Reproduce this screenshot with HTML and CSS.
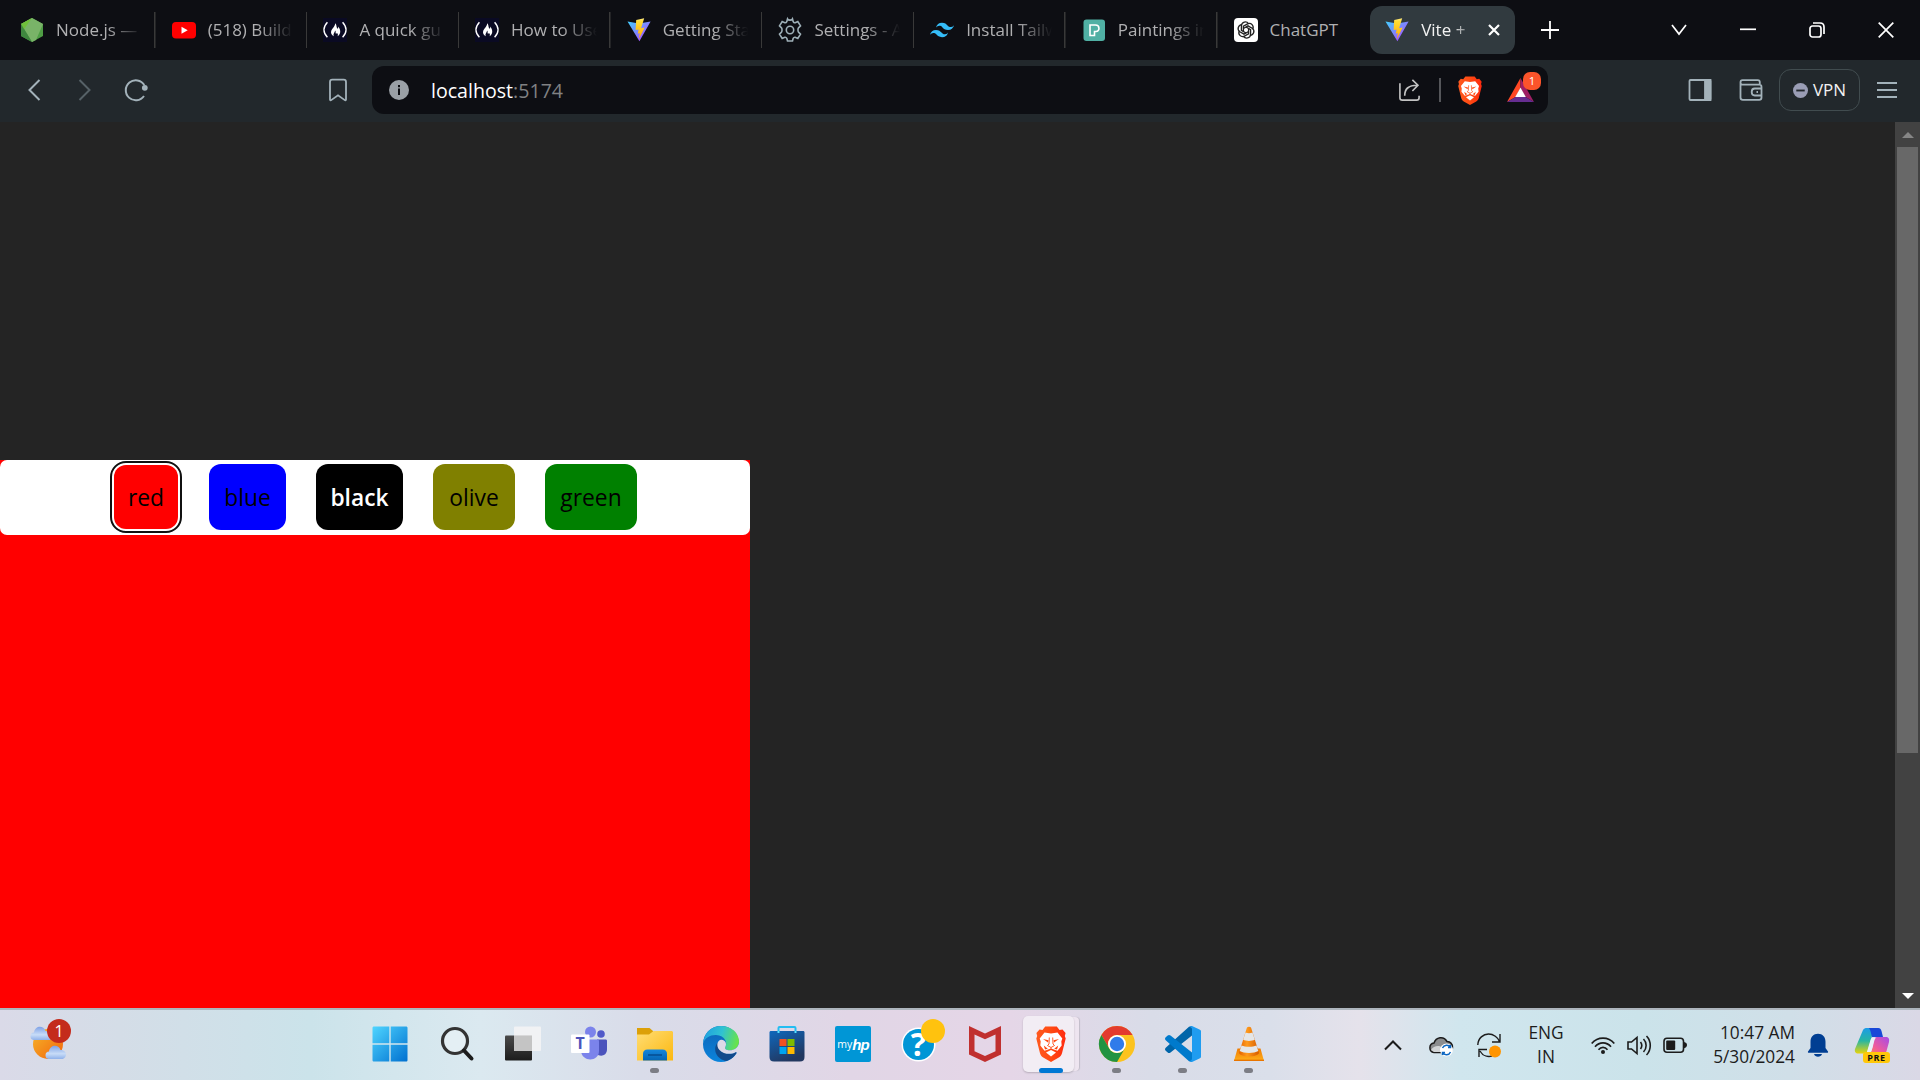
FILE: index.html
```html
<!DOCTYPE html>
<html lang="en">
<head>
<meta charset="utf-8">
<title>Vite + React</title>
<link rel="stylesheet" href="styles.css">
</head>
<body>
<svg class="defs" aria-hidden="true">
  <defs>
    <linearGradient id="viteBlue" x1="0" y1="0" x2="1" y2="1"><stop offset="0" stop-color="#41d1ff"/><stop offset="1" stop-color="#bd34fe"/></linearGradient>
    <linearGradient id="viteBolt" x1="0" y1="0" x2="0" y2="1"><stop offset="0" stop-color="#ffea83"/><stop offset=".15" stop-color="#ffdd35"/><stop offset="1" stop-color="#ffa800"/></linearGradient>
    <linearGradient id="braveFill" x1="0" x2="1"><stop offset="0" stop-color="#ff5a1f"/><stop offset=".5" stop-color="#ff4a12"/><stop offset="1" stop-color="#ff2a10"/></linearGradient>
    <linearGradient id="winFill" x1="0" y1="0" x2="1" y2="1"><stop offset="0" stop-color="#4fd5ff"/><stop offset="1" stop-color="#0070d0"/></linearGradient>
    <linearGradient id="sunFill" x1="0" y1="0" x2="1" y2="1"><stop offset="0" stop-color="#f5b62a"/><stop offset="1" stop-color="#f3640b"/></linearGradient>
    <linearGradient id="cloudFill" x1="0" y1="0" x2="0" y2="1"><stop offset="0" stop-color="#7fa2e6"/><stop offset=".6" stop-color="#c8dcf7"/><stop offset="1" stop-color="#8fb1ea"/></linearGradient>
    <linearGradient id="taskDark" x1="0" y1="0" x2="0" y2="1"><stop offset="0" stop-color="#4a4a4a"/><stop offset="1" stop-color="#1c1c1c"/></linearGradient>
    <linearGradient id="folderFill" x1="0" y1="0" x2="1" y2="1"><stop offset="0" stop-color="#ffdd75"/><stop offset="1" stop-color="#fcb80f"/></linearGradient>
    <linearGradient id="folderDock" x1="0" y1="0" x2="0" y2="1"><stop offset="0" stop-color="#1587dd"/><stop offset="1" stop-color="#0665b4"/></linearGradient>
    <linearGradient id="edgeTop" x1="0" y1=".3" x2="1" y2=".5"><stop offset="0" stop-color="#1e9fe0"/><stop offset=".5" stop-color="#30c2d2"/><stop offset="1" stop-color="#69e447"/></linearGradient>
    <linearGradient id="edgeMid" x1="0" y1="0" x2="0" y2="1"><stop offset="0" stop-color="#0f62b5"/><stop offset="1" stop-color="#0a84dc"/></linearGradient>
    <linearGradient id="storeFill" x1="0" y1="0" x2=".5" y2="1"><stop offset="0" stop-color="#0f68bd"/><stop offset="1" stop-color="#22375f"/></linearGradient>
    <linearGradient id="coneFill" x1="0" x2="1"><stop offset="0" stop-color="#e36100"/><stop offset=".4" stop-color="#ff9a1c"/><stop offset="1" stop-color="#d65c00"/></linearGradient>
    <linearGradient id="coneBase" x1="0" y1="0" x2="0" y2="1"><stop offset="0" stop-color="#ef7a00"/><stop offset="1" stop-color="#ffb01c"/></linearGradient>
    <linearGradient id="copLeft" x1="0" y1="0" x2="0" y2="1"><stop offset="0" stop-color="#1c9be8"/><stop offset=".5" stop-color="#28b6a2"/><stop offset="1" stop-color="#e8d40a"/></linearGradient>
    <linearGradient id="copRight" x1="1" y1="0" x2="0" y2="1"><stop offset="0" stop-color="#a54be8"/><stop offset=".6" stop-color="#ee5a9c"/><stop offset="1" stop-color="#ff8a4c"/></linearGradient>
    <symbol id="vite" viewBox="0 0 24 24">
      <path d="M.5 3.4 12 5.4l11.6-2L12.4 23.3z" fill="url(#viteBlue)"/>
      <path d="M17.2.3 9.2 1.9l-.6 10.2 3-.7-.8 4.3 2-.6-.9 5.8 5.8-11.4-3.6.7z" fill="url(#viteBolt)"/>
    </symbol>
    <symbol id="camp" viewBox="0 0 24 24">
      <path d="M0 0h24v24H0z" fill="#0a0a23"/>
      <path d="M4.4 4.2C-.1 9-.1 14.600 4.400 19.200M19.600 4.200c4.500 4.800 4.500 10.400 0 15" fill="none" stroke="#fff" stroke-width="1.500"/>
      <path d="M12.200 5.200c2 2.200.6 4 2.600 5.500.5-.8.5-1.300.3-2.200 2.400 2.600 3.500 7.100-.5 9.800.7-1.600.2-2.600-.7-3.200-.4.8-1 .9-1.200.1-.3-.9.300-2-.5-2.800-.5 2.400-2.600 3.600-1.200 5.900-4.100-2.100-3.300-5.600-1.400-7.800 1.500-1.800 2.400-3 2.600-5.300z" fill="#fff"/>
    </symbol>
    <symbol id="lion" viewBox="0 0 30 36">
      <path d="M9.200.5h11.600L23.500 4l3-.6L29.600 7l-.8 3 .9 2.500-3.700 14.800c-.5 1.800-1.600 3.200-3.200 4.300L15 36l-7.800-4.400C5.600 30.500 4.500 29.100 4 27.300L.3 12.500l.9-2.500-.8-3 3.100-3.600 3 .6z" fill="url(#braveFill)"/>
      <path d="m8.500 6.500 6.500 1 6.500-1 4.800 6-1 3 .4 4-4.200 5.200-2.200-.8L15 22.500l-4.300 1.400-2.200.8-4.200-5.200.4-4-1-3z" fill="#fff"/>
      <path d="m15 24 5 2.500-5 4-5-4z" fill="#fff"/>
      <path d="m7 13 5.500 1.300-.5 2.200zM23 13l-5.500 1.300.5 2.200zM7.800 19.500l4 3.200-2.800.800zM22.200 19.500l-4 3.200 2.800.800z" fill="#ff4a12"/>
      <path d="m13.300 11.500-.3 6.500-1.500 1.500 3.500 2 3.500-2L17 18l-.3-6.500M15 21.500v2.300" fill="none" stroke="#ff4a12" stroke-width=".9"/>
    </symbol>
  </defs>
</svg>

<div class="screen">
  <header class="tabstrip">
    <nav class="tabs">
      <div class="tab"><svg class="fav" viewBox="0 0 24 24"><path d="m12 0 11 6v12l-11 6-11-6V6z" fill="#4f9e45"/><path d="m12 0 11 6-7 16-4 2L1 6z" fill="#79b368"/><path d="m1 6 11-6-8.500 12z" fill="#6fbf3a"/><path d="m1 6 11 18L1 18z" fill="#3f873f"/></svg><span class="label">Node.js —</span></div>
      <div class="tab"><svg class="fav" viewBox="0 0 24 24"><rect y="4" width="24" height="16.500" rx="4" fill="red"/><path d="m9.500 8.700 6.200 3.500-6.200 3.600z" fill="#fff"/></svg><span class="label">(518) Build</span></div>
      <div class="tab"><svg class="fav"><use href="#camp"/></svg><span class="label">A quick gu</span></div>
      <div class="tab"><svg class="fav"><use href="#camp"/></svg><span class="label">How to Use</span></div>
      <div class="tab"><svg class="fav"><use href="#vite"/></svg><span class="label">Getting Sta</span></div>
      <div class="tab"><svg class="fav line-ico" viewBox="0 0 24 24"><circle cx="12" cy="12" r="3.700"/><path d="m9.500 1 -.7 2.700c-.4.800-1.200 1.200-2 1L4.200 3.600 1.500 7.900l2 2c.7.700.7 3.500 0 4.200l-2 2 2.700 4.300 2.600-1.100c.8-.2 1.600.2 2 1l.7 2.700h5l.7-2.700c.4-.8 1.200-1.200 2-1l2.600 1.100 2.700-4.300-2-2c-.7-.7-.7-3.500 0-4.200l2-2-2.700-4.300-2.600 1.100c-.8.200-1.600-.2-2-1L14.500 1c-.8 1.500-4.200 1.500-5 0z"/></svg><span class="label">Settings - A</span></div>
      <div class="tab"><svg class="fav" viewBox="0 0 24 24"><path d="M12 4.800q-4.800 0-6 4.800 1.800-2.400 4.200-1.800c.9.200 1.600.9 2.300 1.600C13.700 10.600 15.100 12 18 12q4.800 0 6-4.800-1.800 2.400-4.200 1.800c-.9-.2-1.600-.9-2.300-1.600C16.300 6.200 15 4.800 12 4.800zM6 12q-4.800 0-6 4.800 1.800-2.400 4.200-1.800c.9.200 1.600.9 2.300 1.600 1.200 1.200 2.600 2.600 5.500 2.600q4.800 0 6-4.800-1.800 2.400-4.200 1.800c-.9-.2-1.600-.9-2.300-1.600C10.300 13.400 9 12 6 12z" fill="#35bdf8"/></svg><span class="label">Install Tailw</span></div>
      <div class="tab"><svg class="fav" viewBox="0 0 24 24"><rect x="1.500" y="1.500" width="21.500" height="21.500" rx="3" fill="#50b0a4"/><path d="M8 7h5.500c4.500 0 4.500 6.500.5 6.500h-1.500v4H8z" fill="none" stroke="#fff" stroke-width="1.600"/></svg><span class="label">Paintings in</span></div>
      <div class="tab"><svg class="fav" viewBox="0 0 24 24"><rect width="24" height="24" rx="4" fill="#fff"/><g fill="none" stroke="#222" stroke-width="1.350"><path id="pt" d="M9.400 13.500V8.200l4.200-2.400c3.500-1.600 6.700 2 5.100 5.200"/><use href="#pt" transform="rotate(60 12 12)"/><use href="#pt" transform="rotate(120 12 12)"/><use href="#pt" transform="rotate(180 12 12)"/><use href="#pt" transform="rotate(240 12 12)"/><use href="#pt" transform="rotate(300 12 12)"/></g></svg><span class="label">ChatGPT</span></div>
      <div class="tab active"><svg class="fav"><use href="#vite"/></svg><span class="label">Vite +</span><svg class="tab-close" viewBox="0 0 12 12"><path d="m1 1 10 10M11 1 1 11"/></svg></div>
    </nav>
    <svg class="new-tab" viewBox="0 0 18 18"><path d="M9 0v18M0 9h18"/></svg>
    <div class="window-controls">
      <svg viewBox="0 0 16 16"><path d="m1 3 7 9 7-9"/></svg>
      <svg viewBox="0 0 16 16"><path d="M0 7.300h16"/></svg>
      <svg viewBox="0 0 16 16"><rect x="1" y="4" width="11" height="11" rx="2.500"/><path d="M4 1h7c2.500 0 4 1.500 4 4v7"/></svg>
      <svg viewBox="0 0 16 16"><path d="m.7.700 14.600 14.600M15.300.7.700 15.300"/></svg>
    </div>
  </header>

  <div class="toolbar">
    <svg class="tool back" viewBox="0 0 24 24"><path d="M17.500 2 7.500 12l10 10"/></svg>
    <svg class="tool forward" viewBox="0 0 24 24"><path d="m6.500 2 10 10-10 10"/></svg>
    <svg class="tool reload" viewBox="0 0 24 24"><path d="M20 18A10 10 0 1 1 20.300 7"/><circle cx="20.800" cy="9.800" r="2.900"/></svg>
    <svg class="tool bookmark" viewBox="0 0 24 24"><path d="M4 21.500V4c0-1.400 1-2.300 2.300-2.300h11.400C19 1.700 20 2.600 20 4v17.500c0 .7-.7 1-1.200.6L12 17.300l-6.800 4.800c-.5.400-1.200.1-1.200-.6z"/></svg>
    <div class="address">
      <svg class="info" viewBox="0 0 20 20"><circle cx="10" cy="10" r="10" fill="#9aa0a6"/><path d="M9 8.500h2V15H9zM9 5h2v2.200H9z" fill="#0d0e13"/></svg>
      <span class="url">localhost<span class="port">:5174</span></span>
      <svg class="share" viewBox="0 0 24 24"><path d="M2 5v15c0 1.800.7 2.500 2.500 2.500h15c1.800 0 2.500-.7 2.500-2.500v-2M7 18C7 11 10.500 7 20 7M15 1.500 20.800 7 15 13"/></svg>
      <span class="rule"></span>
      <svg class="brave-shield"><use href="#lion"/></svg>
      <div class="rewards">
        <svg viewBox="0 0 27 24"><path d="M13.500 0v10L8.500 19 0 24z" fill="#ff4724"/><path d="M13.500 0 27 24l-8.500-5-5-9z" fill="#9e1f63"/><path d="M0 24h27l-8.500-5h-10z" fill="#662d91"/><path d="m13.500 9.500 5.300 9.500H8.200z" fill="#fff"/></svg>
        <span class="count">1</span>
      </div>
    </div>
    <div class="actions">
      <svg class="tool" viewBox="0 0 24 24"><rect x="1.500" y="2" width="21" height="20" rx="1"/><path d="M17 2h5.500v20H17z" fill="#a3b2ba"/></svg>
      <svg class="tool" viewBox="0 0 24 24"><path d="M1.500 4v15.500c0 1.500.8 2.300 2.300 2.300h16.400c1.500 0 2.300-.8 2.300-2.300V9c0-1.500-.8-2.300-2.300-2.300H3.500C2.300 6.700 1.500 5.700 1.500 4.400S2.300 2.200 3.500 2.200h15.300c1.200 0 2 .8 2 2v2.300M22.500 10.500h-6.800c-2 0-3 1.600-3 3.500s1 3.500 3 3.500h6.800M17.500 14h1.500"/></svg>
      <div class="vpn"><svg viewBox="0 0 16 16"><circle cx="8" cy="8" r="8" fill="#9a9db5"/><path d="M3.500 8h9" stroke="#22272c" stroke-width="2"/></svg><span>VPN</span></div>
      <svg class="tool menu" viewBox="0 0 24 24"><path d="M2 5h20M2 12h20M2 19h20"/></svg>
    </div>
  </div>

  <div class="viewport">
    <main class="app">
      <div class="surface">
        <div class="palette">
          <button class="swatch red">red</button>
          <button class="swatch blue">blue</button>
          <button class="swatch black">black</button>
          <button class="swatch olive">olive</button>
          <button class="swatch green">green</button>
        </div>
      </div>
    </main>
    <aside class="scrollbar">
      <span class="arrow up"></span>
      <span class="thumb"></span>
      <span class="arrow down"></span>
    </aside>
  </div>

  <footer class="taskbar">
    <div class="widgets">
      <svg viewBox="0 0 36 36"><circle cx="18" cy="19" r="15" fill="url(#sunFill)"/><path d="M3.500 15a3.800 3.800 0 0 1 .5-7.500C5 .5 13.500 0 15.500 6c4 0 5 3 5 5v4z" fill="url(#cloudFill)"/><path d="M18.500 34a3.800 3.800 0 0 1 .5-7.500c1-7 9.500-7.500 11.500-1.500 4 0 5.500 2.500 5.500 4.500s-1.500 4.500-4 4.500z" fill="url(#cloudFill)"/></svg>
      <span class="alert">1</span>
    </div>
    <div class="pinned">
      <div class="app-icon"><svg viewBox="0 0 36 36"><path d="M2 .500h15.300v16.800H.5V2C.5 1 1 .5 2 .5zM18.700.5H34c1 0 1.500.5 1.500 1.500v15.300H18.700zM.5 18.700h16.800v16.800H2c-1 0-1.500-.5-1.500-1.500zM18.700 18.700h16.800V34c0 1-.5 1.500-1.500 1.500H18.700z" fill="url(#winFill)"/></svg></div>
      <div class="app-icon"><svg viewBox="0 0 36 36"><circle cx="16" cy="15" r="12.500" fill="#fff" fill-opacity=".3" stroke="#333" stroke-width="3.200"/><path d="m25 24.500 7.500 8" stroke="#1c1c1c" stroke-width="4" stroke-linecap="round"/></svg></div>
      <div class="app-icon"><svg viewBox="0 0 36 36"><rect y="9.500" width="27" height="25" rx="1" fill="url(#taskDark)"/><rect x="9" y=".5" width="27" height="24.500" rx="1" fill="#f3f3f4" fill-opacity=".92"/><path d="M9 9.500h18V25H9z" fill="#c4c4c4"/></svg></div>
      <div class="app-icon"><svg viewBox="0 0 36 36"><circle cx="30" cy="8" r="3.800" fill="#5059c9"/><path d="M26 13.500h8.500c1 0 1.500.500 1.500 1.500v8c0 8-8 7.500-10 5z" fill="#4b53bc"/><circle cx="19.500" cy="6" r="5.500" fill="#7b83eb"/><path d="M11 13.500h15c1.500 0 2 .5 2 2V25c0 11-17 11.500-18 0z" fill="#7b83eb"/><rect x="0" y="8.500" width="18.500" height="18.500" rx="1" fill="#fff"/><text x="4.500" y="23" class="teams-letter">T</text></svg></div>
      <div class="app-icon running"><svg viewBox="0 0 36 36"><path d="M0 2h12.500l3.500 3v6H0z" fill="#dca008"/><path d="M0 8.500h12L16.500 5H35l1 1v28.500H0z" fill="url(#folderFill)"/><path d="M6 34.500V28c0-3 1.500-4.500 4.500-4.500h15c3 0 4.500 1.500 4.500 4.500v6.500z" fill="url(#folderDock)"/><path d="M11 29h14" stroke="#064c91" stroke-width="1.500"/></svg></div>
      <div class="app-icon"><svg viewBox="0 0 36 36"><circle cx="18" cy="18" r="18" fill="url(#edgeMid)"/><path d="M.2 17C1 7 8 0 18 0c10.500 0 18 7 18 15.500 0 5.500-4.500 8.800-9 8.800-4 0-5.700-1.700-4.700-3.300 2.500-4 0-11.500-9.300-12C7 8.800 2 12 .2 17z" fill="url(#edgeTop)"/><path d="M14.500 16.500C9 24 14 33.500 23.500 35c5-1.500 8-4.500 10-8 .3-.7-.3-1.200-1-.8C25 30 15.500 27 14.500 16.500z" fill="#114a8b"/><path d="M22.300 21c2-3.500-.3-7.500-4-7.300-4 .3-5.500 6.300-1.800 10.200 4 4.300 11.500 5 16 2.300.7-.4 1.300.1 1 .8L37 25l-1-8c-1 5-5 7.300-9 7.300-4 0-5.700-1.700-4.700-3.300z" fill="#dcdae8"/></svg></div>
      <div class="app-icon"><svg viewBox="0 0 36 36"><path d="M9.500 7V2c0-.6.400-1 1-1h15c.6 0 1 .4 1 1v5" fill="none" stroke="#24bdf2" stroke-width="2"/><path d="M.5 6.500c0-1 .5-1.500 1.500-1.500h32c1 0 1.500.5 1.500 1.500V31c0 3-1.500 4.500-4.500 4.500H5C2 35.500.5 34 .5 31z" fill="url(#storeFill)"/><path d="M10.500 13h7v7h-7z" fill="#f25022"/><path d="M18.500 13h7v7h-7z" fill="#7fba00"/><path d="M10.500 21h7v7h-7z" fill="#00a4ef"/><path d="M18.500 21h7v7h-7z" fill="#ffb900"/><path d="M9.500 5v2M26.500 5v2" stroke="#55e0ff" stroke-width="2"/></svg></div>
      <div class="app-icon"><div class="myhp"><span class="my">my</span><span class="hp">hp</span></div></div>
      <div class="app-icon"><svg viewBox="0 0 36 36"><circle cx="17.500" cy="18.500" r="17" fill="#fff"/><circle cx="17.500" cy="18.500" r="15.500" fill="#0096d6"/><text x="17.500" y="30" class="help-mark">?</text></svg><span class="pending"></span></div>
      <div class="app-icon"><svg viewBox="0 0 36 36"><path d="m2 0 16 7.500L34 0v28.500L18 36 2 28.500zm5.500 8.500v16.800L18 30l10.500-4.700V8.500L18 13.300z" fill="#c0302f"/></svg></div>
      <div class="app-icon current"><svg class="lion"><use href="#lion"/></svg></div>
      <div class="app-icon running"><svg viewBox="0 0 36 36"><circle cx="18" cy="18" r="18" fill="#fcc31e"/><path d="M2.400 9A18 18 0 0 1 33.600 9H18a9 9 0 0 0-7.800 13.500z" fill="#e33b2e"/><path d="M2.400 9A18 18 0 0 0 18 36l7.800-13.500a9 9 0 0 1-15.600 0z" fill="#229342"/><circle cx="18" cy="18" r="9" fill="#fff"/><circle cx="18" cy="18" r="7.200" fill="#2f7bea"/></svg></div>
      <div class="app-icon running"><svg viewBox="0 0 36 36"><path d="M27 0v9.500L5.500 26.500c-1 .8-2 .8-2.800 0L.7 24.700c-.9-.9-.9-2 0-2.900L24 .8z" fill="#0065a9"/><path d="M27 36v-9.500L5.500 9.500c-1-.8-2-.8-2.800 0L.7 11.300c-.9.900-.9 2 0 2.900L24 35.200z" fill="#007acc"/><path d="M24.500 35.200c1.500-.6 2.500-1 2.500-2.600V3.400c0-1.600-1-2-2.500-2.600L27 0l7.500 3.500c1 .5 1.500 1 1.500 2v25c0 1-.5 1.500-1.500 2L27 36z" fill="#1f9cf0"/></svg></div>
      <div class="app-icon running"><svg viewBox="0 0 36 36"><path d="M6.500 22.500h23L33 35H3z" fill="url(#coneBase)"/><path d="M16 1.500c.7-1 3.300-1 4 0L28 27c-1.500 4.500-18.500 4.500-20 0z" fill="url(#coneFill)"/><path d="M14.500 6.500c2 1 5 1 7 0l2.300 7.300c-3 1.500-8.600 1.500-11.600 0zM10.500 19.500c4 1.800 11 1.800 15 0l1.800 5.500c-4 2.500-14.600 2.500-18.600 0z" fill="#e4e6e8"/><path d="M3 34.300h30" stroke="#e87500" stroke-width="1.400"/></svg></div>
    </div>
    <div class="tray">
      <svg class="chevron" viewBox="0 0 24 24"><path d="m4 16.500 8-8 8 8" fill="none" stroke="#1c1c1c" stroke-width="2"/></svg>
      <svg class="cloud" viewBox="0 0 24 24"><path d="M5 19.500a4.800 4.800 0 0 1 0-9.500C7 4 14.500 2.500 18 8.500c4 .3 5.500 3 5.500 6s-2 5-5 5z" fill="#8b8d8f" stroke="#1b1b1b" stroke-width="1.500"/><path d="M2 17c3-5 12-6 13 2H5z" fill="#d0d3d5"/><circle cx="17.500" cy="17" r="6.500" fill="#fff"/><path d="M13.500 15a4.500 4.500 0 0 1 8-.7m0-2.300v2.500H19M21.500 19a4.500 4.500 0 0 1-8 .7m0 2.300v-2.500H16" fill="none" stroke="#0b66c2" stroke-width="1.500"/></svg>
      <svg class="update" viewBox="0 0 24 24"><path d="M.8 12C1 5 6.500 1 11.500 1c5 0 9.500 3.500 11 7.500M23 1v8h-8M2 24v-7.500h8M3 18c3 5.500 8.500 6 12 5" fill="none" stroke="#1c1c1c" stroke-width="1.400"/><circle cx="18" cy="18.500" r="6" fill="#ff9500"/></svg>
      <div class="language">ENG<br>IN</div>
      <div class="status">
        <svg viewBox="0 0 24 24"><g fill="none" stroke="#1c1c1c" stroke-width="1.700"><path d="M.7 10.500c6-7.200 16.600-7.200 22.600 0M4 13.700c4.500-5.200 11.500-5.200 16 0M7.500 16.700c2.500-3 6.500-3 9 0"/></g><circle cx="12" cy="19" r="2" fill="#1c1c1c"/></svg>
        <svg viewBox="0 0 24 24"><g fill="none" stroke="#1c1c1c" stroke-width="1.600"><path d="M1 9v7h3.500l5.500 4.500v-16L4.500 9zM13.500 9c1.500 2 1.500 5 0 7M16.500 6c3.500 3.500 3.500 9.500 0 13M19.500 3c5 5 5 14 0 19"/></g></svg>
        <svg viewBox="0 0 24 24"><rect x="1" y="5.200" width="19.500" height="14" rx="3" fill="none" stroke="#1c1c1c" stroke-width="1.600"/><rect x="3.200" y="7.500" width="9" height="9.500" rx="1" fill="#1c1c1c"/><path d="M21 9c4 .6 4 5.500 0 6.200z" fill="#1c1c1c"/></svg>
      </div>
      <div class="clock">10:47 AM<br>5/30/2024</div>
      <svg class="bell" viewBox="0 0 24 24"><path d="M2 18.500 4.500 15V8.800C4.500 4 7.500.8 12 .8s7.500 3.200 7.500 8V15l2.500 3.500c.3.900-.1 1.200-.7 1.200H2.700c-.6 0-1-.3-.7-1.200zM8 21h8c-1 3.500-7 3.500-8 0z" fill="#003e92"/></svg>
      <div class="copilot">
        <svg viewBox="0 0 36 36"><path d="M9 3C10 1.500 11 1 13 1h10c2 0 3 .8 3.500 2.500L28 9H18l-4 14c-.7 2.500-2 3.500-4 3.500H4C1 26.500.5 24 1 22z" fill="url(#copLeft)"/><path d="M18 1h6c2 0 3 1 3.500 3L29 10H18c-1-3-1-6-3-9z" fill="#1847d8"/><path d="M21 10h11c3 0 3.500 2.500 3 5l-2.500 9c-.6 2.500-2 3.500-4 3.500H14c2 0 2.800-1 3.500-3.500L20 13z" fill="url(#copRight)"/><path d="M20 10.500h2.500c-2 1-2 3-3.500 8.500-1 4-2 7-4.500 7-2 0-1.500-1.500-1-3l3-10c.4-1.700 1.500-2.500 3.500-2.500z" fill="#e7f1fa"/></svg>
        <span class="pre">PRE</span>
      </div>
    </div>
  </footer>
</div>
</body>
</html>
```

FILE: styles.css
```css
* { box-sizing: border-box; }
body { margin: 0; font-family: "Open Sans", "Noto Sans", sans-serif; background: #242424; }
svg { display: block; flex: none; overflow: visible; }
.defs { position: absolute; width: 0; height: 0; }
.screen { width: 1920px; height: 1080px; display: flex; flex-direction: column; overflow: hidden; }

/* Tab strip */
.tabstrip { height: 60px; flex: none; display: flex; align-items: center; background: #0d0e13; padding-left: 4px; }
.tabs { display: flex; }
.tab { width: 151.7px; height: 48px; display: flex; align-items: center; padding: 0 12px 0 16px; gap: 12px; color: #b0b0b2; font-size: 17px; background: linear-gradient(#393939, #393939) right center / 1.5px 36px no-repeat; }
.tab:nth-child(9) { background: none; }
.tab.active { width: 145px; margin-left: 1px; padding-left: 15px; padding-right: 15px; background: #313a3f; border-radius: 12px; color: #f2f2f2; }
.fav { width: 24px; height: 24px; }
.line-ico { fill: none; stroke: #9eb0b8; stroke-width: 1.6; }
.label { flex: 1; min-width: 0; height: 26px; line-height: 25px; overflow: hidden; white-space: nowrap; -webkit-mask-image: linear-gradient(90deg, #000 58%, transparent 98%); mask-image: linear-gradient(90deg, #000 58%, transparent 98%); }
.tab:nth-child(9) .label { -webkit-mask-image: none; mask-image: none; }
.tab-close { width: 12px; height: 12px; stroke: #fff; stroke-width: 2.2; }
.new-tab { width: 18px; height: 18px; margin-left: 26px; stroke: #fff; stroke-width: 1.8; }
.window-controls { margin-left: auto; padding-right: 26.500px; display: flex; gap: 53px; }
.window-controls svg { width: 16px; height: 16px; fill: none; stroke: #fff; stroke-width: 1.7; }

/* Toolbar */
.toolbar { height: 62px; flex: none; display: flex; align-items: center; background: #22282c; padding: 0 21px 2px 22px; }
.tool { width: 24px; height: 24px; fill: none; stroke: #a3b2ba; stroke-width: 1.8; }
.back { stroke-width: 2; }
.forward { margin-left: 27px; stroke: #566167; stroke-width: 2; }
.reload { margin-left: 27px; stroke-width: 2; }
.reload circle { fill: #a3b2ba; stroke: none; }
.bookmark { margin-left: 178px; }
.address { width: 1176px; height: 48px; margin-left: 22px; display: flex; align-items: center; padding: 0 14px 0 17px; background: #0d0e13; border-radius: 12px; }
.info { width: 20px; height: 20px; }
.url { margin-left: 21px; padding: 1px 0 0 1px; font-size: 19.6px; line-height: 26px; color: #fff; }
.port { color: #808183; }
.share { width: 23px; height: 24px; margin-left: auto; fill: none; stroke: #c3c3c3; stroke-width: 1.7; }
.rule { width: 2px; height: 24px; margin: 0 17px 0 18px; background: #55565a; }
.brave-shield { width: 24px; height: 29px; }
.rewards { position: relative; margin-left: 25px; }
.rewards svg { width: 27px; height: 24px; }
.count { position: absolute; left: 16px; top: -6px; width: 18px; height: 18px; border-radius: 7px; background: #fb542b; color: #fff; font-size: 11.5px; line-height: 18px; text-align: center; }
.actions { margin-left: auto; display: flex; align-items: center; }
.actions .tool + .tool { margin-left: 27px; }
.vpn { width: 81px; height: 42px; margin: 0 15px 0 16px; display: flex; align-items: center; justify-content: center; gap: 5px; border: 1.5px solid #414c4f; border-radius: 12px; color: #f2f2f2; font-size: 17px; }
.vpn svg { width: 15px; height: 15px; }
.vpn span { padding-bottom: 2px; }

/* Page */
.viewport { flex: 1; display: flex; background: #242424; }
.app { flex: 1; padding-top: 338px; }
.surface { width: 750px; height: 548px; background: red; }
.palette { height: 75px; display: flex; justify-content: center; gap: 30px; padding-top: 4px; background: #fff; border-radius: 7px; }
.swatch { height: 66px; padding: 0; border: 0; border-radius: 12px; font: 500 22.8px "Open Sans", sans-serif; color: #000; }
.red { width: 64px; height: 64px; margin: 1px; background: red; outline: 2px solid #101010; outline-offset: 2px; }
.blue { width: 77px; background: blue; }
.black { width: 87px; background: #000; color: #fff; font-weight: 600; }
.olive { width: 82px; background: olive; }
.green { width: 92px; background: green; }
.scrollbar { width: 25px; display: flex; flex-direction: column; align-items: center; background: #424242; }
.arrow { border: 6px solid transparent; }
.up { margin-top: 4px; border-bottom-color: #868686; }
.thumb { width: 21px; height: 606px; margin-top: 9px; background: #686868; }
.down { margin-top: auto; margin-bottom: 3px; border-top-color: #fff; }

/* Taskbar */
.taskbar { height: 72px; flex: none; display: flex; border-top: 2px solid #adb5bd; background: linear-gradient(90deg, #dadae8 0, #d4dde7 120px, #cbe3ea 310px, #dbe9f0 480px, #d9dce9 640px, #e1d6e6 850px, #e5d6e7 1010px, #d9dce8 1150px, #dadfea 1270px, #e5e2eb 1360px, #d0e6ee 1460px, #cbe3ea 1640px, #d0dfe8 1790px, #dad8e6 1920px); }
.widgets { position: relative; width: 357px; padding: 15px 0 0 30px; }
.widgets svg { width: 36px; height: 36px; }
.alert { position: absolute; left: 47px; top: 9px; width: 24px; height: 24px; border-radius: 50%; background: #c42b1c; color: #fff; font-size: 16px; line-height: 24px; text-align: center; }
.pinned { display: flex; }
.app-icon { position: relative; width: 66px; height: 70px; display: flex; justify-content: center; padding: 16px 0 0 2px; }
.app-icon:first-child { padding-left: 0; }
.app-icon svg { width: 36px; height: 36px; }
.app-icon .lion { width: 30px; height: 36px; }
.running::after { content: ""; position: absolute; left: 29px; top: 58px; width: 9px; height: 5px; border-radius: 3px; background: #7c7d85; }
.current { z-index: 0; }
.current::before { content: ""; position: absolute; z-index: -1; left: 6px; top: 6px; width: 51px; height: 56px; border-radius: 5px; background: #f2edf4; box-shadow: 0 1px 2px #0003, 6px 0 0 -1px #eee5f0, 7px 0 1px -1px #0002; }
.current::after { content: ""; position: absolute; left: 22px; top: 58px; width: 24px; height: 5px; border-radius: 3px; background: #0078d4; }
.teams-letter { font: 700 16px "Open Sans", sans-serif; fill: #4b53bc; }
.help-mark { font: 700 32px "Open Sans", sans-serif; fill: #fff; text-anchor: middle; }
.myhp { width: 36px; height: 36px; border-radius: 2px; background: #0096d6; color: #fff; display: flex; justify-content: center; align-items: center; line-height: 1; }
.my { font-size: 10.5px; }
.hp { font: italic 700 15px "Liberation Sans", sans-serif; letter-spacing: -1px; }
.pending { position: absolute; left: 36px; top: 9px; width: 24px; height: 24px; border-radius: 50%; background: #ffc20e; }
.tray { margin-left: auto; display: flex; align-items: center; padding: 0 30px 1px 0; color: #1c1c1c; font-size: 17.3px; line-height: 24px; }
.tray svg { width: 24px; height: 24px; }
.cloud { margin-left: 24px; }
.update { margin-left: 24px; }
.language { width: 44px; margin-left: 23px; text-align: center; }
.status { display: flex; gap: 12px; margin-left: 23px; }
.clock { width: 96px; margin-left: 12px; text-align: right; }
.bell { margin-left: 11px; }
.copilot { position: relative; margin-left: 24px; }
.tray .copilot svg { width: 36px; height: 36px; }
.pre { position: absolute; left: 9px; top: 25px; width: 27px; height: 11px; border-radius: 3px; background: #ffc80a; color: #111; font: 700 9px/11px "Open Sans", sans-serif; letter-spacing: .7px; text-align: center; }
```
